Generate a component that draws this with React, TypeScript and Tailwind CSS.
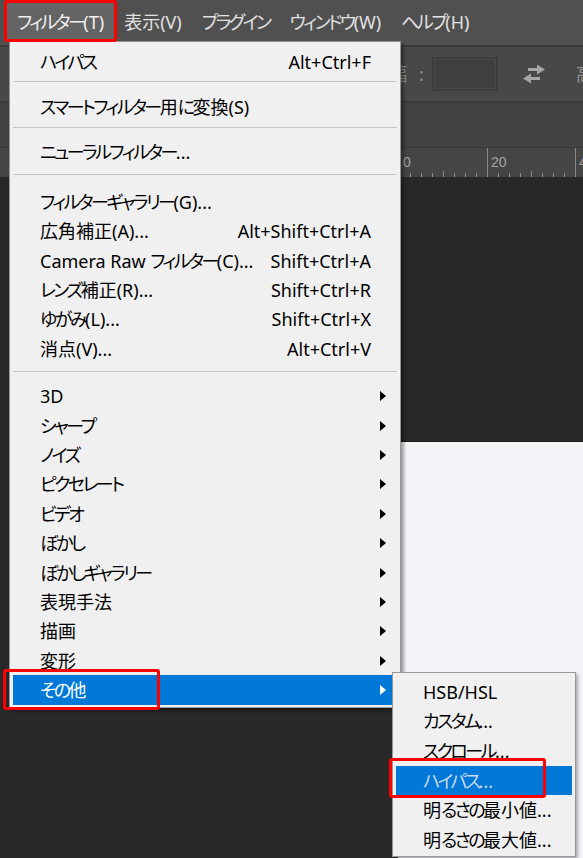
import React from "react";

type Row =
  | { kind: "item"; label: string; shortcut?: string; sub?: boolean; active?: boolean }
  | { kind: "sep"; space: string };

const menuBar = [
  { label: "フィルター(T)", active: true },
  { label: "表示(V)" },
  { label: "プラグイン" },
  { label: "ウィンドウ(W)" },
  { label: "ヘルプ(H)" },
];

const filterMenu: Row[] = [
  { kind: "item", label: "ハイパス", shortcut: "Alt+Ctrl+F" },
  { kind: "sep", space: "pt-[5px] pb-[10px]" },
  { kind: "item", label: "スマートフィルター用に変換(S)" },
  { kind: "sep", space: "pt-[5px] pb-[10px]" },
  { kind: "item", label: "ニューラルフィルター..." },
  { kind: "sep", space: "pt-[7px] pb-[12px]" },
  { kind: "item", label: "フィルターギャラリー(G)..." },
  { kind: "item", label: "広角補正(A)...", shortcut: "Alt+Shift+Ctrl+A" },
  { kind: "item", label: "Camera Raw フィルター(C)...", shortcut: "Shift+Ctrl+A" },
  { kind: "item", label: "レンズ補正(R)...", shortcut: "Shift+Ctrl+R" },
  { kind: "item", label: "ゆがみ(L)...", shortcut: "Shift+Ctrl+X" },
  { kind: "item", label: "消点(V)...", shortcut: "Alt+Ctrl+V" },
  { kind: "sep", space: "pt-[7px] pb-[10px]" },
  { kind: "item", label: "3D", sub: true },
  { kind: "item", label: "シャープ", sub: true },
  { kind: "item", label: "ノイズ", sub: true },
  { kind: "item", label: "ピクセレート", sub: true },
  { kind: "item", label: "ビデオ", sub: true },
  { kind: "item", label: "ぼかし", sub: true },
  { kind: "item", label: "ぼかしギャラリー", sub: true },
  { kind: "item", label: "表現手法", sub: true },
  { kind: "item", label: "描画", sub: true },
  { kind: "item", label: "変形", sub: true },
  { kind: "item", label: "その他", sub: true, active: true },
];

const otherMenu = [
  { label: "HSB/HSL" },
  { label: "カスタム..." },
  { label: "スクロール..." },
  { label: "ハイパス...", active: true },
  { label: "明るさの最小値..." },
  { label: "明るさの最大値..." },
];

// only the labels right of the menu are visible
const rulerLabels = ["", "", "", "", "0", "20", "40"];

// kana in the Windows UI font are narrower than in Noto CJK, so tighten them
function Jp({ text }: { text: string }) {
  const parts = text.split(/([\u3040-\u30ff]+)/);
  return (
    <>
      {parts.map((p, i) =>
        /[\u3040-\u30ff]/.test(p) ? (
          <span key={i} className="tracking-[-2.5px]">
            {p}
          </span>
        ) : (
          p
        )
      )}
    </>
  );
}

function SubArrow({ light }: { light?: boolean }) {
  return (
    <svg width="6" height="10" viewBox="0 0 6 10" className="ml-auto shrink-0">
      <path d="M0 0 L6 5 L0 10 Z" fill={light ? "#ffffff" : "#000000"} />
    </svg>
  );
}

function SwapIcon() {
  return (
    <svg width="24" height="20" viewBox="0 0 24 20">
      <g fill="#a6a6a6">
        <rect x="6" y="4" width="11" height="3" />
        <path d="M15 0.5 L23 5.5 L15 10.5 Z" />
        <rect x="7" y="13" width="11" height="3" />
        <path d="M9 9.5 L1 14.5 L9 19.5 Z" />
      </g>
    </svg>
  );
}

function RulerSegment({ label }: { label: string }) {
  return (
    <svg width="88" height="29" viewBox="0 0 88 29" className="shrink-0">
      <line x1="0.5" y1="0" x2="0.5" y2="29" stroke="#8a8a8a" />
      {[11, 22, 33, 44, 55, 66, 77].map((x) => (
        <line key={x} x1={x + 0.5} y1={x === 44 ? 23 : 25} x2={x + 0.5} y2="29" stroke="#8a8a8a" />
      ))}
      {label && (
        <text x="4" y="19" fontSize="14" fill="#a4a4a4" fontFamily="Liberation Sans, Arial, sans-serif">
          {label}
        </text>
      )}
    </svg>
  );
}

export default function App() {
  return (
    <div className="relative flex h-[858px] w-[583px] flex-col overflow-hidden bg-[#282828] font-['Noto_Sans','Noto_Sans_CJK_JP',sans-serif] text-[18px] [font-feature-settings:'palt']">
      {/* menu bar */}
      <header className="flex h-[47px] shrink-0 items-stretch border-b-2 border-[#3b3b3b] bg-[#505050] pt-[3px] pb-[4px] pl-[7px]">
        {menuBar.map((m) => (
          <div
            key={m.label}
            className={`flex items-center px-[10px] leading-none ${
              m.active ? "bg-[#646464] text-[#f2f2f2]" : "text-[#e2e2e2]"
            }`}
          >
            <Jp text={m.label} />
          </div>
        ))}
      </header>

      {/* options bar */}
      <div className="flex h-[56px] shrink-0 items-center border-b-2 border-[#3a3a3a] bg-[#484848] pl-[389px] text-[#8f8f8f]">
        <span className="leading-none">幅</span>
        <span className="ml-[12px] leading-none">:</span>
        <div className="ml-[8px] h-[34px] w-[66px] shrink-0 border-2 border-[#3d3d3d] bg-[#3f3f3f] shadow-[inset_0_0_0_1px_#4a4a4a]" />
        <div className="ml-[24px] shrink-0">
          <SwapIcon />
        </div>
        <span className="ml-[30px] shrink-0 leading-none">高</span>
      </div>

      {/* tab row */}
      <div className="h-[45px] shrink-0 border-b border-[#383838] bg-[#424242]" />

      {/* ruler */}
      <div className="flex h-[29px] shrink-0 bg-[#454545] pl-[47px]">
        {rulerLabels.map((l, i) => (
          <RulerSegment key={i} label={l} />
        ))}
      </div>

      {/* pasteboard + document */}
      <div className="flex flex-1 flex-col">
        <div className="h-[264px] shrink-0" />
        <div className="ml-[398px] flex-1 border-t border-[#1c1c1c] bg-[#f3f4f8]" />
      </div>

      {/* filter menu */}
      <div className="absolute left-[9px] top-[41px] w-[392px] border border-[#979797] bg-[#f0f0f0] pt-[5px] pb-[2px] text-black shadow-[3px_3px_3px_rgba(0,0,0,0.35)]">
        {filterMenu.map((r, i) =>
          r.kind === "sep" ? (
            <div key={i} className={`mx-[3px] ${r.space}`}>
              <div className="h-px bg-[#c4c4c4]" />
            </div>
          ) : (
            <div
              key={i}
              className={`mx-[3px] flex h-[29.4px] items-center pl-[27px] pr-[11px] leading-none ${
                r.active ? "bg-[#0078d7] text-white" : ""
              }`}
            >
              <span className="whitespace-nowrap">
                <Jp text={r.label} />
              </span>
              {r.shortcut && <span className="ml-auto mr-[15px] whitespace-nowrap">{r.shortcut}</span>}
              {r.sub && <SubArrow light={r.active} />}
            </div>
          )
        )}
      </div>

      {/* その他 submenu */}
      <div className="absolute left-[392px] top-[672px] w-[184px] border border-[#979797] bg-[#f0f0f0] pt-[4px] pb-[1px] text-black shadow-[2px_2px_3px_rgba(0,0,0,0.3)]">
        {otherMenu.map((m) => (
          <div
            key={m.label}
            className={`mx-[3px] flex h-[29.6px] items-center pl-[27px] leading-none whitespace-nowrap ${
              m.active ? "bg-[#0078d7] text-[#c9daf0]" : ""
            }`}
          >
            <Jp text={m.label} />
          </div>
        ))}
      </div>

      {/* red callout boxes */}
      <div className="absolute left-[4px] top-0 h-[42px] w-[113px] rounded-[3px] border-[3px] border-[#ff0000]" />
      <div className="absolute left-[3px] top-[669px] h-[41px] w-[157px] rounded-[3px] border-[3px] border-[#ff0000]" />
      <div className="absolute left-[389px] top-[758px] h-[40px] w-[157px] rounded-[3px] border-[3px] border-[#ff0000]" />
    </div>
  );
}
